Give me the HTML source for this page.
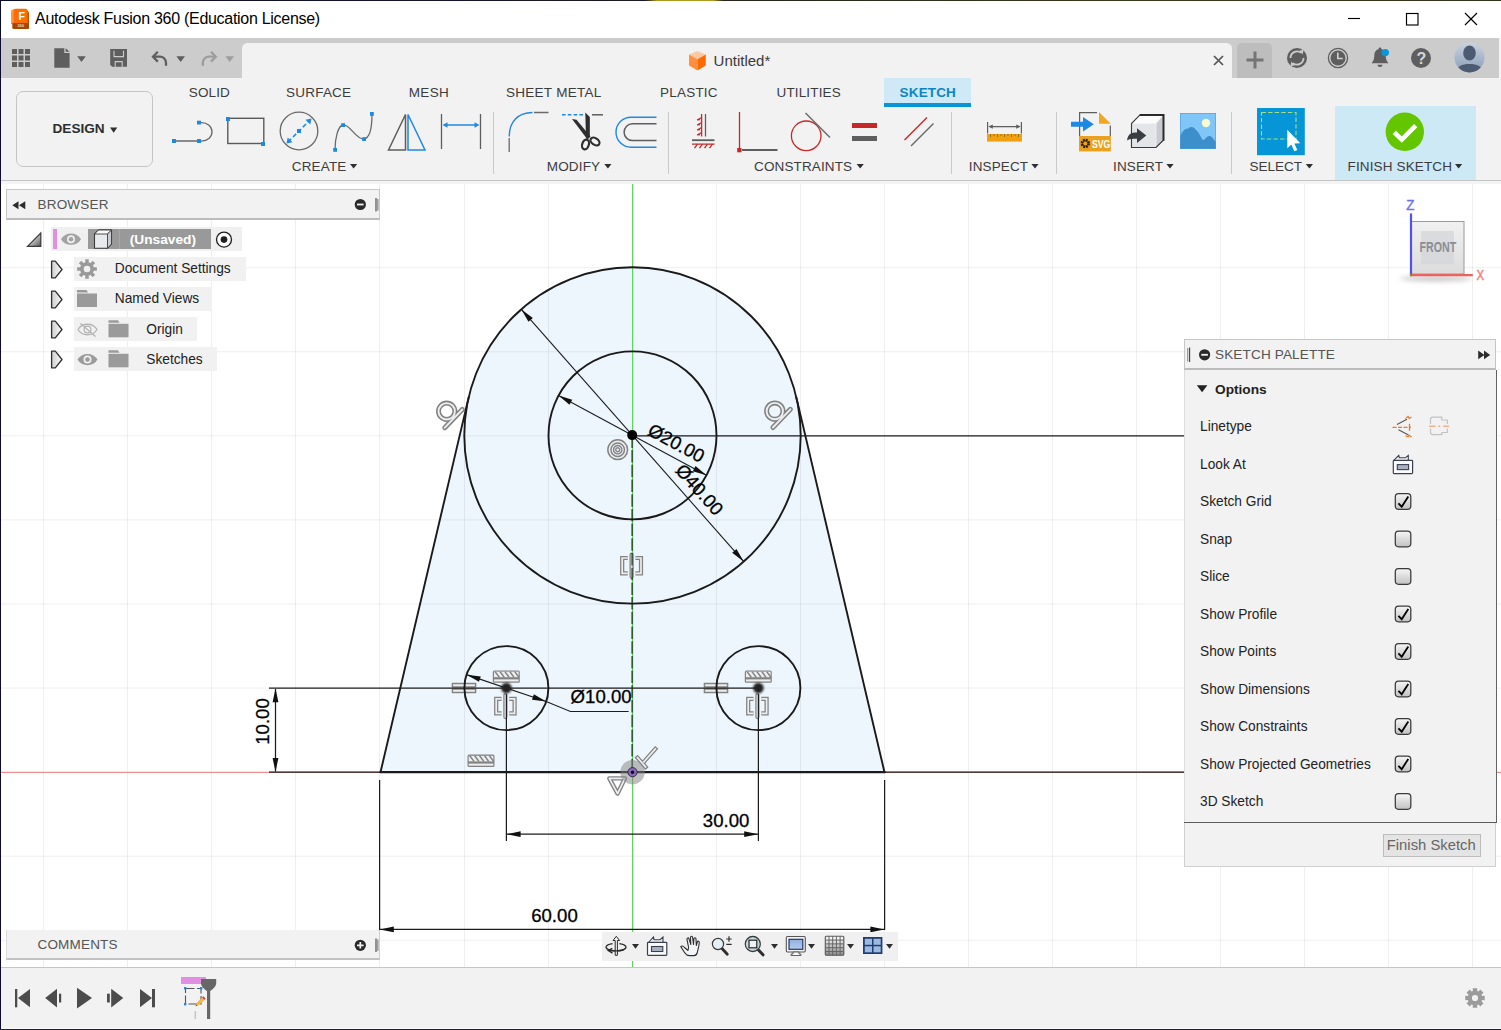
<!DOCTYPE html>
<html lang="en"><head><meta charset="utf-8"><title>Autodesk Fusion 360 (Education License)</title>
<style>
html,body{margin:0;padding:0;background:#fff;}
body{width:1501px;height:1030px;overflow:hidden;font-family:"Liberation Sans",Arial,sans-serif;}
#root{position:relative;width:1501px;height:1030px;overflow:hidden;background:#fff;}
#canvas{position:absolute;left:0;top:0;z-index:0;}
#icons{position:absolute;left:0;top:0;z-index:5;pointer-events:none;}
.b{position:absolute;box-sizing:border-box;z-index:1;}
.t{position:absolute;white-space:pre;line-height:20px;z-index:3;font-family:"Liberation Sans",Arial,sans-serif;}
svg text{font-family:"Liberation Sans",Arial,sans-serif;}

</style></head>
<body>
<div id="root">
<svg id="canvas" width="1501" height="1030" viewBox="0 0 1501 1030">
<defs>
<filter id="blur0" x="-60%" y="-120%" width="220%" height="340%"><feGaussianBlur stdDeviation="0.45"/></filter>
<filter id="blur1" x="-50%" y="-50%" width="200%" height="200%"><feGaussianBlur stdDeviation="0.9"/></filter>
<filter id="blur3" x="-50%" y="-200%" width="200%" height="500%"><feGaussianBlur stdDeviation="2.5"/></filter>
<linearGradient id="vcg" x1="0" y1="0" x2="0" y2="1"><stop offset="0" stop-color="#f1f1f1"/><stop offset="1" stop-color="#dcdcdc"/></linearGradient>
<linearGradient id="cbg" x1="0" y1="0" x2="0" y2="1"><stop offset="0" stop-color="#f6f6f6"/><stop offset="1" stop-color="#c2c2c2"/></linearGradient>
</defs>
<path d="M380.5 772.2 L468.77 396.89 A168.2 168.2 0 0 1 796.23 396.89 L884.5 772.2 Z" fill="#eef6fd"/>
<g stroke="#000" stroke-opacity="0.068" stroke-width="1">
<line x1="43.5" y1="181" x2="43.5" y2="967"/>
<line x1="127.5" y1="181" x2="127.5" y2="967"/>
<line x1="211.5" y1="181" x2="211.5" y2="967"/>
<line x1="295.5" y1="181" x2="295.5" y2="967"/>
<line x1="379.5" y1="181" x2="379.5" y2="967"/>
<line x1="464.5" y1="181" x2="464.5" y2="967"/>
<line x1="548.5" y1="181" x2="548.5" y2="967"/>
<line x1="716.5" y1="181" x2="716.5" y2="967"/>
<line x1="800.5" y1="181" x2="800.5" y2="967"/>
<line x1="884.5" y1="181" x2="884.5" y2="967"/>
<line x1="968.5" y1="181" x2="968.5" y2="967"/>
<line x1="1052.5" y1="181" x2="1052.5" y2="967"/>
<line x1="1136.5" y1="181" x2="1136.5" y2="967"/>
<line x1="1220.5" y1="181" x2="1220.5" y2="967"/>
<line x1="1304.5" y1="181" x2="1304.5" y2="967"/>
<line x1="1388.5" y1="181" x2="1388.5" y2="967"/>
<line x1="1472.5" y1="181" x2="1472.5" y2="967"/>
<line x1="1" y1="267.70" x2="1501" y2="267.70"/>
<line x1="1" y1="351.77" x2="1501" y2="351.77"/>
<line x1="1" y1="435.84" x2="1501" y2="435.84"/>
<line x1="1" y1="519.91" x2="1501" y2="519.91"/>
<line x1="1" y1="603.98" x2="1501" y2="603.98"/>
<line x1="1" y1="688.05" x2="1501" y2="688.05"/>
<line x1="1" y1="856.19" x2="1501" y2="856.19"/>
<line x1="1" y1="940.26" x2="1501" y2="940.26"/>
</g>
<line x1="1" y1="772.4" x2="1501" y2="772.4" stroke="#ee8f8f" stroke-width="1.3"/>
<line x1="632.6" y1="181" x2="632.6" y2="967" stroke="#5fd35f" stroke-width="1.25"/><g transform="translate(446.7,411.3)" filter="url(#blur0)"><path d="M-8.2,0 a8.2,8.2 0 1,0 16.4,0 a8.2,8.2 0 1,0 -16.4,0 M-1.9,16.4 L15.6,-1.8" fill="none" stroke="#828282" stroke-width="5.0" stroke-linecap="round"/><path d="M-8.2,0 a8.2,8.2 0 1,0 16.4,0 a8.2,8.2 0 1,0 -16.4,0 M-1.9,16.4 L15.6,-1.8" fill="none" stroke="#eceef0" stroke-width="1.9" stroke-linecap="round"/></g>
<g transform="translate(774.8,411.1)" filter="url(#blur0)"><path d="M-8.2,0 a8.2,8.2 0 1,0 16.4,0 a8.2,8.2 0 1,0 -16.4,0 M-1.9,16.4 L15.6,-1.8" fill="none" stroke="#828282" stroke-width="5.0" stroke-linecap="round"/><path d="M-8.2,0 a8.2,8.2 0 1,0 16.4,0 a8.2,8.2 0 1,0 -16.4,0 M-1.9,16.4 L15.6,-1.8" fill="none" stroke="#eceef0" stroke-width="1.9" stroke-linecap="round"/></g>
<g transform="translate(617.7,449.7)" filter="url(#blur0)"><path d="M-8.3,0 a8.3,8.3 0 1,0 16.6,0 a8.3,8.3 0 1,0 -16.6,0" fill="none" stroke="#828282" stroke-width="4.6" /><path d="M-8.3,0 a8.3,8.3 0 1,0 16.6,0 a8.3,8.3 0 1,0 -16.6,0" fill="none" stroke="#eceef0" stroke-width="1.7" /><path d="M-3.1,0 a3.1,3.1 0 1,0 6.2,0 a3.1,3.1 0 1,0 -6.2,0" fill="none" stroke="#828282" stroke-width="3.6" /><path d="M-3.1,0 a3.1,3.1 0 1,0 6.2,0 a3.1,3.1 0 1,0 -6.2,0" fill="none" stroke="#eceef0" stroke-width="0.9" /></g>
<g transform="translate(631.6,565.7)" filter="url(#blur0)"><path d="M0,-11 L0,11" fill="none" stroke="#828282" stroke-width="4.2" stroke-linecap="round"/><path d="M0,-11 L0,11" fill="none" stroke="#eceef0" stroke-width="1.7" stroke-linecap="round"/><path d="M-3.9,-7.7 L-9.4,-7.7 L-9.4,7.7 L-3.9,7.7 M3.9,-7.7 L9.4,-7.7 L9.4,7.7 L3.9,7.7" fill="none" stroke="#828282" stroke-width="4.2" stroke-linejoin="miter"/><path d="M-3.9,-7.7 L-9.4,-7.7 L-9.4,7.7 L-3.9,7.7 M3.9,-7.7 L9.4,-7.7 L9.4,7.7 L3.9,7.7" fill="none" stroke="#eceef0" stroke-width="1.7" stroke-linejoin="miter"/></g>
<g transform="translate(505.4,706.1)" filter="url(#blur0)"><path d="M0,-11 L0,11" fill="none" stroke="#828282" stroke-width="4.2" stroke-linecap="round"/><path d="M0,-11 L0,11" fill="none" stroke="#eceef0" stroke-width="1.7" stroke-linecap="round"/><path d="M-3.9,-7.2 L-9.2,-7.2 L-9.2,7.2 L-3.9,7.2 M3.9,-7.2 L9.2,-7.2 L9.2,7.2 L3.9,7.2" fill="none" stroke="#828282" stroke-width="4.2" stroke-linejoin="miter"/><path d="M-3.9,-7.2 L-9.2,-7.2 L-9.2,7.2 L-3.9,7.2 M3.9,-7.2 L9.2,-7.2 L9.2,7.2 L3.9,7.2" fill="none" stroke="#eceef0" stroke-width="1.7" stroke-linejoin="miter"/></g>
<g transform="translate(757.4,706.1)" filter="url(#blur0)"><path d="M0,-11 L0,11" fill="none" stroke="#828282" stroke-width="4.2" stroke-linecap="round"/><path d="M0,-11 L0,11" fill="none" stroke="#eceef0" stroke-width="1.7" stroke-linecap="round"/><path d="M-3.9,-7.2 L-9.2,-7.2 L-9.2,7.2 L-3.9,7.2 M3.9,-7.2 L9.2,-7.2 L9.2,7.2 L3.9,7.2" fill="none" stroke="#828282" stroke-width="4.2" stroke-linejoin="miter"/><path d="M-3.9,-7.2 L-9.2,-7.2 L-9.2,7.2 L-3.9,7.2 M3.9,-7.2 L9.2,-7.2 L9.2,7.2 L3.9,7.2" fill="none" stroke="#eceef0" stroke-width="1.7" stroke-linejoin="miter"/></g>
<g transform="translate(506.3,676.5)" filter="url(#blur0)"><rect x="-13.5" y="-6.1" width="27" height="12.3" rx="1.5" fill="#828282"/><rect x="-12.3" y="2.9" width="24.6" height="2.1" fill="#eceef0"/><rect x="-12.3" y="-4.9" width="24.6" height="5.6" fill="#eceef0"/><path d="M-11.2,-4.9 L-7.0,0.7" stroke="#828282" stroke-width="1.5" fill="none"/><path d="M-6.299999999999999,-4.9 L-2.099999999999999,0.7" stroke="#828282" stroke-width="1.5" fill="none"/><path d="M-1.399999999999999,-4.9 L2.800000000000001,0.7" stroke="#828282" stroke-width="1.5" fill="none"/><path d="M3.5000000000000013,-4.9 L7.700000000000001,0.7" stroke="#828282" stroke-width="1.5" fill="none"/><path d="M8.400000000000002,-4.9 L12.600000000000001,0.7" stroke="#828282" stroke-width="1.5" fill="none"/></g>
<g transform="translate(758.3,676.5)" filter="url(#blur0)"><rect x="-13.5" y="-6.1" width="27" height="12.3" rx="1.5" fill="#828282"/><rect x="-12.3" y="2.9" width="24.6" height="2.1" fill="#eceef0"/><rect x="-12.3" y="-4.9" width="24.6" height="5.6" fill="#eceef0"/><path d="M-11.2,-4.9 L-7.0,0.7" stroke="#828282" stroke-width="1.5" fill="none"/><path d="M-6.299999999999999,-4.9 L-2.099999999999999,0.7" stroke="#828282" stroke-width="1.5" fill="none"/><path d="M-1.399999999999999,-4.9 L2.800000000000001,0.7" stroke="#828282" stroke-width="1.5" fill="none"/><path d="M3.5000000000000013,-4.9 L7.700000000000001,0.7" stroke="#828282" stroke-width="1.5" fill="none"/><path d="M8.400000000000002,-4.9 L12.600000000000001,0.7" stroke="#828282" stroke-width="1.5" fill="none"/></g>
<g transform="translate(481.0,760.7)" filter="url(#blur0)"><rect x="-13.5" y="-6.1" width="27" height="12.3" rx="1.5" fill="#828282"/><rect x="-12.3" y="2.9" width="24.6" height="2.1" fill="#eceef0"/><rect x="-12.3" y="-4.9" width="24.6" height="5.6" fill="#eceef0"/><path d="M-11.2,-4.9 L-7.0,0.7" stroke="#828282" stroke-width="1.5" fill="none"/><path d="M-6.299999999999999,-4.9 L-2.099999999999999,0.7" stroke="#828282" stroke-width="1.5" fill="none"/><path d="M-1.399999999999999,-4.9 L2.800000000000001,0.7" stroke="#828282" stroke-width="1.5" fill="none"/><path d="M3.5000000000000013,-4.9 L7.700000000000001,0.7" stroke="#828282" stroke-width="1.5" fill="none"/><path d="M8.400000000000002,-4.9 L12.600000000000001,0.7" stroke="#828282" stroke-width="1.5" fill="none"/></g>
<g transform="translate(464,688)" filter="url(#blur0)"><path d="M-9.8,-2.7 L9.8,-2.7 M-9.8,2.7 L9.8,2.7" fill="none" stroke="#828282" stroke-width="5.0" stroke-linecap="square"/><path d="M-9.8,-2.7 L9.8,-2.7 M-9.8,2.7 L9.8,2.7" fill="none" stroke="#eceef0" stroke-width="2.1" stroke-linecap="square"/></g>
<g transform="translate(716,688)" filter="url(#blur0)"><path d="M-9.8,-2.7 L9.8,-2.7 M-9.8,2.7 L9.8,2.7" fill="none" stroke="#828282" stroke-width="5.0" stroke-linecap="square"/><path d="M-9.8,-2.7 L9.8,-2.7 M-9.8,2.7 L9.8,2.7" fill="none" stroke="#eceef0" stroke-width="2.1" stroke-linecap="square"/></g>
<g filter="url(#blur0)"><path d="M643.9,761.9 L655.4,748.9 M637.4,757.6 L645.6,767.0" fill="none" stroke="#828282" stroke-width="4.2" stroke-linecap="square"/><path d="M643.9,761.9 L655.4,748.9 M637.4,757.6 L645.6,767.0" fill="none" stroke="#eceef0" stroke-width="1.7" stroke-linecap="square"/></g>
<g filter="url(#blur0)"><path d="M609.3,778.4 L624.9,778.4 L617.6,793.6 Z" fill="none" stroke="#828282" stroke-width="4.4" stroke-linejoin="round"/><path d="M609.3,778.4 L624.9,778.4 L617.6,793.6 Z" fill="none" stroke="#eceef0" stroke-width="1.7" stroke-linejoin="round"/></g><g stroke="#1c1c1c" stroke-width="1.25" fill="none">
<line x1="637" y1="435.9" x2="1185" y2="435.9"/>
<line x1="269" y1="688.1" x2="758.5" y2="688.1"/>
<line x1="269" y1="772.2" x2="381" y2="772.2"/>
<line x1="884" y1="772.2" x2="1185" y2="772.2"/>
<line x1="275.5" y1="689" x2="275.5" y2="771.5"/>
<line x1="506.4" y1="694" x2="506.4" y2="841"/>
<line x1="758.4" y1="694" x2="758.4" y2="841"/>
<line x1="506.4" y1="834.2" x2="758.4" y2="834.2"/>
<line x1="379.6" y1="780" x2="379.6" y2="930"/>
<line x1="884.6" y1="780" x2="884.6" y2="930"/>
<line x1="379.6" y1="929.4" x2="884.6" y2="929.4"/>
<line x1="558.54" y1="395.58" x2="706.46" y2="475.22" stroke-width="1.1"/>
<line x1="521.40" y1="309.38" x2="743.60" y2="561.42" stroke-width="1.1"/>
<polyline points="466.62,674.63 546.18,701.57 570.4,711.5 628.6,711.5" stroke-width="1.1"/>
</g>
<g fill="#111">
<polygon points="275.50,688.30 278.40,702.30 272.60,702.30"/>
<polygon points="275.50,772.00 272.60,758.00 278.40,758.00"/>
<polygon points="506.60,834.20 520.60,831.30 520.60,837.10"/>
<polygon points="758.20,834.20 744.20,837.10 744.20,831.30"/>
<polygon points="379.80,929.40 393.80,926.50 393.80,932.30"/>
<polygon points="884.40,929.40 870.40,932.30 870.40,926.50"/>
<polygon points="558.54,395.58 572.24,399.66 569.49,404.77"/>
<polygon points="706.46,475.22 692.76,471.14 695.51,466.03"/>
<polygon points="521.40,309.38 532.83,317.97 528.48,321.80"/>
<polygon points="743.60,561.42 732.17,552.83 736.52,549.00"/>
<polygon points="466.62,674.63 480.81,676.38 478.95,681.87"/>
<polygon points="546.18,701.57 531.99,699.82 533.85,694.33"/>
</g>
<line x1="632.1" y1="435.4" x2="632.1" y2="772.2" stroke="#1b331b" stroke-width="1.25" stroke-dasharray="12.5 2.2"/>
<g stroke="#1a1a1a" stroke-width="1.9" fill="none" stroke-linecap="round">
<circle cx="632.5" cy="435.4" r="168.2"/>
<circle cx="632.5" cy="435.4" r="84"/>
<circle cx="506.4" cy="688.1" r="42"/>
<circle cx="758.4" cy="688.1" r="42"/>
<line x1="380.5" y1="772.2" x2="468.77" y2="396.89"/>
<line x1="884.5" y1="772.2" x2="796.23" y2="396.89"/>
<line x1="380.5" y1="772.2" x2="884.5" y2="772.2" stroke-width="2.3"/>
</g>
<circle cx="632.2" cy="435.09999999999997" r="5" fill="#000"/>
<g filter="url(#blur1)"><circle cx="506.4" cy="688.1" r="5.3" fill="#222"/><circle cx="758.4" cy="688.1" r="5.3" fill="#222"/></g>
<circle cx="632.5" cy="772.2" r="12.2" fill="#808080" fill-opacity="0.5"/>
<circle cx="632.5" cy="772.2" r="4.6" fill="#8d66c4" stroke="#1a1a1a" stroke-width="0.8"/>
<circle cx="632.5" cy="772.2" r="1.7" fill="#000"/>
<text x="531.2" y="921.5" font-size="18.6" fill="#000" stroke="#000" stroke-width="0.3">60.00</text>
<text x="702.8" y="826.5" font-size="18.6" fill="#000" stroke="#000" stroke-width="0.3">30.00</text>
<text x="570.6" y="703" font-size="18.6" fill="#000" stroke="#000" stroke-width="0.3">Ø10.00</text>
<text x="0" y="0" font-size="18.6" fill="#000" stroke="#000" stroke-width="0.3" transform="translate(269,744.8) rotate(-90)">10.00</text>
<text x="11.7" y="-7.6" font-size="18.6" fill="#000" stroke="#000" stroke-width="0.3" transform="translate(632.5,435.4) rotate(28.3)">Ø20.00</text>
<text x="54.4" y="-8" font-size="18.6" fill="#000" stroke="#000" stroke-width="0.3" transform="translate(632.5,435.4) rotate(48.6)">Ø40.00</text><g id="viewcube">
<ellipse cx="1436" cy="278.6" rx="36" ry="2.6" fill="#777" opacity="0.42" filter="url(#blur3)"/>
<rect x="1411.5" y="221.5" width="52.5" height="52.5" fill="url(#vcg)" stroke="#9b9b9b" stroke-width="1"/>
<rect x="1421" y="231" width="33" height="33" fill="#d3d6da" opacity="0.75"/>
<text x="1419.6" y="252.3" font-size="14.8" font-weight="bold" fill="#8a8e94" textLength="36.6" lengthAdjust="spacingAndGlyphs">FRONT</text>
<line x1="1411" y1="213.4" x2="1411" y2="275.2" stroke="#5252f2" stroke-width="2.2"/>
<line x1="1410" y1="275.2" x2="1472.8" y2="275.2" stroke="#ea6262" stroke-width="2.3"/>
<rect x="1409.9" y="274" width="2.2" height="2.3" fill="#8c8c2e"/>
<text x="1406.3" y="209.9" font-size="14.8" fill="#7070f2" stroke="#7070f2" stroke-width="0.45" textLength="8.2" lengthAdjust="spacingAndGlyphs">Z</text>
<text x="1476.6" y="279.8" font-size="14.8" fill="#f28282" stroke="#f28282" stroke-width="0.45" textLength="7.6" lengthAdjust="spacingAndGlyphs">X</text>
</g>

</svg>
<!-- window frame + title bar -->
<div class="b" style="left:0px;top:0px;width:1501px;height:38px;background:#ffffff;"></div>
<div class="b" style="left:0px;top:0px;width:1501px;height:1px;background:#2b2b33;background:linear-gradient(90deg,#0a0a2c 0%,#14142a 30%,#1a1a24 43%,#b09a1e 43.8%,#b09a1e 47.5%,#24241c 48.2%,#3a3a1e 75%,#33331c 100%)"></div>
<div class="b" style="left:0px;top:0px;width:1px;height:1030px;background:#0c0c32;z-index:6"></div>
<div class="t " style="left:35.00px;top:8.96px;font-size:16px;color:#000;font-weight:normal;letter-spacing:-0.29px">Autodesk Fusion 360 (Education License)</div>
<!-- quick access / document tab band -->
<div class="b" style="left:1px;top:38px;width:1498px;height:40px;background:#cccccc;"></div>
<div class="b" style="left:1499px;top:38px;width:2px;height:40px;background:#f4f4f4;"></div>
<div class="b" style="left:242px;top:43px;width:990px;height:35px;background:#f2f2f2;border-radius:5.5px 5.5px 0 0"></div>
<div class="b" style="left:1237px;top:43px;width:35px;height:35px;background:#bdbdbd;border-radius:5px 5px 0 0"></div>
<div class="t " style="left:713.60px;top:50.60px;font-size:15px;color:#3a3a3a;font-weight:normal;">Untitled*</div>
<!-- ribbon -->
<div class="b" style="left:1px;top:78px;width:1500px;height:102px;background:#f2f2f2;"></div>
<div class="b" style="left:1px;top:180px;width:1500px;height:1px;background:#c4c4c4;"></div>
<div class="b" style="left:1px;top:181px;width:1500px;height:3px;background:#f4f4f4;"></div>
<div class="b" style="left:884px;top:78px;width:87px;height:25.5px;background:#cfe9f6;"></div>
<div class="b" style="left:884px;top:103.3px;width:87px;height:3.5px;background:#0696d7;"></div>
<div class="b" style="left:1335px;top:105.5px;width:141px;height:74.5px;background:#cde9f6;"></div>
<div class="b" style="left:15.5px;top:91px;width:137px;height:76px;background:#f2f2f2;border:1px solid #c6c6c6;border-radius:7px"></div>
<div class="t " style="left:52.50px;top:118.59px;font-size:13.6px;color:#2e2e2e;font-weight:bold;">DESIGN</div>
<div class="t " style="left:188.80px;top:82.62px;font-size:13.5px;color:#3c3c3c;font-weight:normal;letter-spacing:0.12px">SOLID</div>
<div class="t " style="left:286.00px;top:82.62px;font-size:13.5px;color:#3c3c3c;font-weight:normal;letter-spacing:0.22px">SURFACE</div>
<div class="t " style="left:408.80px;top:82.62px;font-size:13.5px;color:#3c3c3c;font-weight:normal;letter-spacing:0.3px">MESH</div>
<div class="t " style="left:506.00px;top:82.62px;font-size:13.5px;color:#3c3c3c;font-weight:normal;letter-spacing:0.27px">SHEET METAL</div>
<div class="t " style="left:660.00px;top:82.62px;font-size:13.5px;color:#3c3c3c;font-weight:normal;letter-spacing:0.22px">PLASTIC</div>
<div class="t " style="left:776.50px;top:82.62px;font-size:13.5px;color:#3c3c3c;font-weight:normal;letter-spacing:0.15px">UTILITIES</div>
<div class="t " style="left:899.60px;top:82.62px;font-size:13.5px;color:#0e84c4;font-weight:bold;letter-spacing:0.15px">SKETCH</div>
<div class="t " style="left:291.80px;top:157.42px;font-size:13.5px;color:#3c3c3c;font-weight:normal;letter-spacing:0.15px">CREATE</div>
<div class="t " style="left:546.80px;top:157.42px;font-size:13.5px;color:#3c3c3c;font-weight:normal;letter-spacing:0.15px">MODIFY</div>
<div class="t " style="left:754.00px;top:157.42px;font-size:13.5px;color:#3c3c3c;font-weight:normal;letter-spacing:0.13px">CONSTRAINTS</div>
<div class="t " style="left:968.80px;top:157.42px;font-size:13.5px;color:#3c3c3c;font-weight:normal;letter-spacing:0.13px">INSPECT</div>
<div class="t " style="left:1113.00px;top:157.42px;font-size:13.5px;color:#3c3c3c;font-weight:normal;letter-spacing:0.15px">INSERT</div>
<div class="t " style="left:1249.50px;top:157.42px;font-size:13.5px;color:#3c3c3c;font-weight:normal;">SELECT</div>
<div class="t " style="left:1347.60px;top:157.42px;font-size:13.5px;color:#3c3c3c;font-weight:normal;letter-spacing:0.13px">FINISH SKETCH</div>
<div class="b" style="left:493px;top:112px;width:1px;height:62px;background:#c9c9c9;"></div>
<div class="b" style="left:668px;top:112px;width:1px;height:62px;background:#c9c9c9;"></div>
<div class="b" style="left:951px;top:112px;width:1px;height:62px;background:#c9c9c9;"></div>
<div class="b" style="left:1056px;top:112px;width:1px;height:62px;background:#c9c9c9;"></div>
<div class="b" style="left:1231px;top:112px;width:1px;height:62px;background:#c9c9c9;"></div>
<!-- BROWSER panel -->
<div class="b" style="left:6px;top:189px;width:374px;height:31px;background:#f2f2f2;border:1px solid #c9c9c9;border-bottom:2px solid #bcbcbc"></div>
<div class="t " style="left:37.50px;top:194.52px;font-size:13.5px;color:#555;font-weight:normal;letter-spacing:0.2px">BROWSER</div>
<div class="b" style="left:51px;top:227px;width:191px;height:24px;background:#f0f0f0;"></div>
<div class="b" style="left:53px;top:229px;width:4px;height:20px;background:#e08fe0;"></div>
<div class="b" style="left:88px;top:229px;width:123px;height:20px;background:#999999;"></div>
<div class="b" style="left:119px;top:229px;width:1px;height:20px;background:#a8a8a8;"></div>
<div class="t " style="left:129.80px;top:229.85px;font-size:13.7px;color:#fff;font-weight:bold;">(Unsaved)</div>
<div class="b" style="left:74px;top:257px;width:172px;height:24px;background:#f1f1f1;"></div>
<div class="t " style="left:114.80px;top:259.44px;font-size:13.73px;color:#222;font-weight:normal;">Document Settings</div>
<div class="b" style="left:74px;top:287px;width:138px;height:24px;background:#f1f1f1;"></div>
<div class="t " style="left:114.80px;top:289.44px;font-size:13.73px;color:#222;font-weight:normal;">Named Views</div>
<div class="b" style="left:74px;top:317px;width:123px;height:24px;background:#f1f1f1;"></div>
<div class="t " style="left:146.30px;top:319.54px;font-size:13.73px;color:#222;font-weight:normal;">Origin</div>
<div class="b" style="left:74px;top:347px;width:143px;height:24px;background:#f1f1f1;"></div>
<div class="t " style="left:146.30px;top:349.54px;font-size:13.73px;color:#222;font-weight:normal;">Sketches</div>
<!-- COMMENTS panel -->
<div class="b" style="left:6px;top:930px;width:374px;height:30px;background:#f2f2f2;border-bottom:2px solid #c2c2c2;border-left:1px solid #dcdcdc;border-right:1px solid #cfcfcf"></div>
<div class="t " style="left:37.50px;top:935.32px;font-size:13.5px;color:#555;font-weight:normal;letter-spacing:0.18px">COMMENTS</div>
<!-- navigation bar -->
<div class="b" style="left:602px;top:931.5px;width:296px;height:29px;background:#f0f0f0;"></div>
<!-- timeline -->
<div class="b" style="left:1px;top:967px;width:1500px;height:1px;background:#c6c6c6;"></div>
<div class="b" style="left:1px;top:968px;width:1500px;height:60px;background:#f2f2f2;"></div>
<div class="b" style="left:0px;top:1028px;width:1501px;height:1px;background:#f8f8f8;"></div>
<div class="b" style="left:0px;top:1029px;width:1501px;height:1px;background:#20202c;z-index:7"></div>
<!-- SKETCH PALETTE -->
<div class="b" style="left:1184px;top:339px;width:312px;height:31px;background:#f2f2f2;border:1px solid #c6c6c6;border-bottom:2px solid #bbbbbb"></div>
<div class="t " style="left:1215.00px;top:344.69px;font-size:13.6px;color:#555;font-weight:normal;letter-spacing:0.12px">SKETCH PALETTE</div>
<div class="b" style="left:1184px;top:370px;width:313px;height:452.5px;background:#f2f2f2;border-right:1px solid #636363;border-left:1px solid #dcdcdc"></div>
<div class="b" style="left:1184px;top:822px;width:313px;height:1px;background:#5a5a5a;"></div>
<div class="b" style="left:1184px;top:823px;width:312px;height:44px;background:#f2f2f2;border:1px solid #d0d0d0;border-top:none"></div>
<div class="t " style="left:1215.00px;top:379.55px;font-size:13.7px;color:#222;font-weight:bold;">Options</div>
<div class="t " style="left:1200.00px;top:417.44px;font-size:13.73px;color:#222;font-weight:normal;">Linetype</div>
<div class="t " style="left:1200.00px;top:454.94px;font-size:13.73px;color:#222;font-weight:normal;">Look At</div>
<div class="t " style="left:1200.00px;top:492.44px;font-size:13.73px;color:#222;font-weight:normal;">Sketch Grid</div>
<div class="t " style="left:1200.00px;top:529.94px;font-size:13.73px;color:#222;font-weight:normal;">Snap</div>
<div class="t " style="left:1200.00px;top:567.44px;font-size:13.73px;color:#222;font-weight:normal;">Slice</div>
<div class="t " style="left:1200.00px;top:604.94px;font-size:13.73px;color:#222;font-weight:normal;">Show Profile</div>
<div class="t " style="left:1200.00px;top:642.44px;font-size:13.73px;color:#222;font-weight:normal;">Show Points</div>
<div class="t " style="left:1200.00px;top:679.94px;font-size:13.73px;color:#222;font-weight:normal;">Show Dimensions</div>
<div class="t " style="left:1200.00px;top:717.44px;font-size:13.73px;color:#222;font-weight:normal;">Show Constraints</div>
<div class="t " style="left:1200.00px;top:754.94px;font-size:13.73px;color:#222;font-weight:normal;">Show Projected Geometries</div>
<div class="t " style="left:1200.00px;top:792.44px;font-size:13.73px;color:#222;font-weight:normal;">3D Sketch</div>
<div class="b" style="left:1382.5px;top:833.5px;width:98.5px;height:23px;background:#e4e4e4;border:1px solid #bdbdbd"></div>
<div class="t " style="left:1386.80px;top:834.87px;font-size:14.8px;color:#666;font-weight:normal;">Finish Sketch</div>

<svg id="icons" width="1501" height="1030" viewBox="0 0 1501 1030">
<defs>
<linearGradient id="fg" x1="0" y1="0" x2="1" y2="1"><stop offset="0" stop-color="#ff8f1f"/><stop offset="1" stop-color="#f26a00"/></linearGradient>
<linearGradient id="avg" x1="0" y1="0" x2="0" y2="1"><stop offset="0" stop-color="#c9d3e0"/><stop offset="1" stop-color="#8b9cb6"/></linearGradient>
<clipPath id="avc"><circle cx="1469.5" cy="57.5" r="15"/></clipPath>
</defs>
<!-- app icon -->
<g id="appicon">
<path d="M11,10.600 L14,9 V24.300 H11 z" fill="#ff9644"/>
<path d="M27,10 L29,12.300 V27.500 a1.500,1.500 0 0 1 -1.500,1.500 H27 z" fill="#c05200"/>
<rect x="13.600" y="8.800" width="13.900" height="15" rx="1.600" fill="#ff6d00"/>
<path d="M12.300,23.100 H29 V27.500 a1.500,1.500 0 0 1 -1.500,1.500 H13.800 a1.500,1.500 0 0 1 -1.500,-1.500 z" fill="#a84600"/>
<text x="18.500" y="19.900" font-size="10.600" font-weight="bold" fill="#fff">F</text>
<text x="17.200" y="27.100" font-size="4" font-weight="bold" fill="#f3cdb0" textLength="7" lengthAdjust="spacingAndGlyphs">360</text>
</g>
<!-- window controls -->
<g stroke="#000" stroke-width="1.150" fill="none">
<line x1="1348" y1="18.500" x2="1360" y2="18.500"/>
<rect x="1406.500" y="13.500" width="11.500" height="11.500"/>
<path d="M1465,13 L1477,25 M1477,13 L1465,25"/>
</g>
<!-- quick access icons -->
<g fill="#5e5e5e">
<g id="gridicon">
<rect x="12" y="49" width="5" height="5"/><rect x="18.500" y="49" width="5" height="5"/><rect x="25" y="49" width="5" height="5"/>
<rect x="12" y="55.500" width="5" height="5"/><rect x="18.500" y="55.500" width="5" height="5"/><rect x="25" y="55.500" width="5" height="5"/>
<rect x="12" y="62" width="5" height="5"/><rect x="18.500" y="62" width="5" height="5"/><rect x="25" y="62" width="5" height="5"/>
</g>
<path d="M54.300,48.200 h10 v4.800 h5.300 v14.700 h-15.300 z M65.600,48.200 l4,3.600 h-4 z"/>
<path d="M77.200,56.300 h8.600 l-4.300,5.600 z"/>
<!-- save -->
<path d="M110.200,49 h16.800 v17.800 h-14.800 l-2,-2 z"/>
<path d="M114,50.800 V56.600 H123.500 V50.800 M115.200,66.800 V61.600 H122.200 V66.800" fill="none" stroke="#cccccc" stroke-width="1.100"/>
<!-- undo -->
<path d="M176.400,56.300 h8.600 l-4.300,5.600 z"/>
</g>
<g fill="none" stroke="#5e5e5e" stroke-width="2.300">
<path d="M157.800,51.800 L153,56.700 L157.800,61.600"/>
<path d="M153.500,56.700 h6.500 a6,6 0 0 1 6,6 v3"/>
</g>
<!-- redo (disabled) -->
<g fill="none" stroke="#9d9d9d" stroke-width="2.300">
<path d="M211,51.800 L215.800,56.700 L211,61.600"/>
<path d="M215.300,56.700 h-6.500 a6,6 0 0 0 -6,6 v3"/>
</g>
<path d="M225.400,56.300 h8.600 l-4.300,5.600 z" fill="#9d9d9d"/>
<!-- document tab: cube, close, plus -->
<g id="doccube">
<path d="M697.400,50.900 L705.800,54.600 L697.400,59.200 L689,54.600 z" fill="#ffc9a2"/>
<path d="M689,54.600 L697.400,59.200 V70.400 L689,65.400 z" fill="#ff8f3c"/>
<path d="M705.800,54.600 L697.400,59.200 V70.400 L705.800,65.400 z" fill="#ff6a00"/>
</g>
<path d="M1214,56 L1223,65 M1223,56 L1214,65" stroke="#555" stroke-width="1.700" fill="none"/>
<path d="M1246.500,60 h17 M1255,51.500 v17" stroke="#747474" stroke-width="3" fill="none"/>
<!-- job status -->
<g id="jobstatus">
<circle cx="1297" cy="58" r="10" fill="#5e5e5e"/>
<path d="M1290.500,58 a6.500,6.500 0 0 1 10.500,-5.200" fill="none" stroke="#ccc" stroke-width="1.800"/>
<path d="M1303.500,58 a6.500,6.500 0 0 1 -10.500,5.200" fill="none" stroke="#ccc" stroke-width="1.800"/>
<path d="M1299.200,50.500 l4.300,-0.600 l-0.800,4.600 z" fill="#ccc"/>
<path d="M1294.800,65.500 l-4.300,0.600 l0.800,-4.600 z" fill="#ccc"/>
</g>
<!-- clock -->
<g id="clock">
<circle cx="1338" cy="58" r="9.600" fill="none" stroke="#5e5e5e" stroke-width="1.300"/>
<circle cx="1338" cy="58" r="7.500" fill="#5e5e5e"/>
<path d="M1337.800,52.500 v6 h5" fill="none" stroke="#d0d0d0" stroke-width="1.600"/>
</g>
<!-- bell -->
<g id="bell">
<path d="M1380,47.500 c0.900,0 1.400,0.600 1.400,1.500 c3,0.900 4.300,3.500 4.300,6.500 c0,3.500 0.800,5.500 2.800,7.700 h-17 c2,-2.200 2.800,-4.200 2.800,-7.700 c0,-3 1.300,-5.600 4.300,-6.500 c0,-0.900 0.500,-1.500 1.400,-1.500 z" fill="#5e5e5e"/>
<path d="M1377.500,64.700 h5 a2.500,2.300 0 0 1 -5,0 z" fill="#5e5e5e"/>
<circle cx="1385.300" cy="52.600" r="3.700" fill="#0a96dc"/>
</g>
<!-- help -->
<g id="help">
<circle cx="1421" cy="58" r="10" fill="#5e5e5e"/>
<text x="1416.400" y="63.800" font-size="16" font-weight="bold" fill="#d6d6d6">?</text>
</g>
<!-- avatar -->
<g id="avatar">
<circle cx="1469.500" cy="57.500" r="15" fill="url(#avg)"/>
<g clip-path="url(#avc)" fill="#4d5b72">
<ellipse cx="1469.500" cy="53" rx="6.300" ry="7.500"/>
<path d="M1455,76 c0,-9 6,-12 14.500,-12 s14.500,3 14.500,12 z"/>
</g>
</g>
<!-- dropdown arrows -->
<g fill="#2f2f2f">
<path d="M110,127.400 h7.300 l-3.650,5.400 z"/>
<path d="M350,164 h7.200 l-3.600,4.600 z"/>
<path d="M604.300,164 h7.200 l-3.600,4.600 z"/>
<path d="M856.600,164 h7.200 l-3.600,4.600 z"/>
<path d="M1031.400,164 h7.200 l-3.600,4.600 z"/>
<path d="M1166.400,164 h7.200 l-3.600,4.600 z"/>
<path d="M1305.800,164 h7.200 l-3.600,4.600 z"/>
<path d="M1455,164 h7.200 l-3.600,4.600 z"/>
</g>
<!-- CREATE: line/arc -->
<g id="i-line">
<path d="M176,141 H199 M200,122.600 C216,121.500 216,142 200,141" fill="none" stroke="#6a6a6a" stroke-width="1.300"/>
<g fill="#1e88e5"><rect x="172" y="139" width="4" height="4"/><rect x="197" y="139" width="4" height="4"/><rect x="197" y="120.700" width="4" height="3.800"/></g>
</g>
<!-- rectangle -->
<g id="i-rect">
<rect x="227.800" y="118.300" width="36" height="25.200" fill="none" stroke="#5a5a5a" stroke-width="1.400"/>
<g fill="#1e88e5"><rect x="226" y="117" width="4" height="4"/><rect x="261" y="142" width="4" height="4"/></g>
</g>
<!-- circle -->
<g id="i-circle">
<circle cx="299" cy="131" r="18.800" fill="none" stroke="#6a6a6a" stroke-width="1.300"/>
<path d="M288,142 L310,120" stroke="#1e88e5" stroke-width="1.500" stroke-dasharray="4.500 2.500" fill="none"/>
<path d="M311.500,118.500 l-6,1.200 l4.800,4.800 z M286.500,143.500 l6,-1.200 l-4.800,-4.800 z" fill="#1e88e5"/>
<rect x="297" y="129" width="4" height="4" fill="#1e88e5"/>
</g>
<!-- spline -->
<g id="i-spline">
<path d="M335,150 C335,138 338,126 343,125 C350,124 356,140 364,139 C370,138 372,126 372,114" fill="none" stroke="#6a6a6a" stroke-width="1.300"/>
<g fill="#1e88e5"><rect x="333.200" y="148" width="3.800" height="3.800"/><rect x="341.200" y="123.200" width="3.800" height="3.800"/><rect x="362.200" y="137.200" width="3.800" height="3.800"/><rect x="370" y="112" width="3.800" height="3.800"/></g>
</g>
<!-- mirror -->
<g id="i-mirror" fill="none" stroke-width="1.500">
<path d="M405.500,114.500 V150 H388.500 z" stroke="#5e5e5e"/>
<path d="M408,114.500 V150 H425 z" stroke="#1e88e5"/>
</g>
<!-- sketch dimension -->
<g id="i-dim">
<path d="M441.500,114 V149 M480.500,114 V149" stroke="#5e5e5e" stroke-width="1.300" fill="none"/>
<path d="M445,125 H477" stroke="#1e88e5" stroke-width="1.500"/>
<path d="M442.500,125 l5,-2.700 v5.400 z M479.500,125 l-5,-2.700 v5.400 z" fill="#1e88e5"/>
</g>
<!-- MODIFY: fillet -->
<g id="i-fillet" fill="none">
<path d="M509.200,136.500 C509.200,122 518,112.500 532.500,112.500" stroke="#1e88e5" stroke-width="1.400"/>
<path d="M534,112.500 H548.500 M509.200,138 V152" stroke="#6a6a6a" stroke-width="1.300"/>
</g>
<!-- trim (scissors) -->
<g id="i-trim">
<path d="M562,114.800 H583" stroke="#1e88e5" stroke-width="1.500" stroke-dasharray="3.600 2.200"/>
<path d="M592,114.800 H603" stroke="#5e5e5e" stroke-width="1.500"/>
<g fill="#2e2e2e">
<path d="M585.300,112.500 L589.800,117 L589.800,137 L586,138.500 z"/>
<path d="M572,119 L576.500,119.800 L590.500,136.500 L587.500,139.500 z"/>
</g>
<g fill="none" stroke="#2e2e2e" stroke-width="2.200">
<ellipse cx="585.500" cy="144.500" rx="3.300" ry="5" transform="rotate(18 585.500 144.500)"/>
<ellipse cx="595" cy="141.500" rx="3.300" ry="5" transform="rotate(-55 595 141.500)"/>
</g>
</g>
<!-- offset -->
<g id="i-offset" fill="none">
<path d="M656.500,117.200 H631 A15,15 0 0 0 631,147.200 H656.500" stroke="#1e88e5" stroke-width="1.400"/>
<path d="M656.500,123.800 H632.500 A8.400,8.400 0 0 0 632.500,140.600 H656.500" stroke="#5e5e5e" stroke-width="1.500"/>
</g>
<!-- CONSTRAINTS: fix/unfix -->
<g id="i-fix" fill="none">
<path d="M705.500,114 V136.500" stroke="#5e5e5e" stroke-width="1.300"/>
<path d="M692,140.200 H714.500" stroke="#5e5e5e" stroke-width="1.800"/>
<path d="M701.600,114 V136.500 M692,144.200 H714.500" stroke="#c62828" stroke-width="1.300"/>
<path d="M701.600,117.500 l-4.500,2.500 l3,-0.300 M701.600,122.500 l-4.500,2.500 l3,-0.300 M701.600,127.500 l-4.500,2.500 l3,-0.300 M701.600,132.500 l-4.500,2.500 l3,-0.300" stroke="#c62828" stroke-width="1.100"/>
<path d="M697.500,144.200 l-3,4 M702.500,144.200 l-3,4 M707.500,144.200 l-3,4 M712.500,144.200 l-3,4" stroke="#c62828" stroke-width="1.300"/>
</g>
<!-- coincident -->
<g id="i-coinc">
<path d="M739.500,112 V148" stroke="#c62828" stroke-width="1.300"/>
<path d="M742,150 H777.500" stroke="#5e5e5e" stroke-width="1.800"/>
<rect x="737.200" y="148" width="4.300" height="4.300" fill="#c62828"/>
</g>
<!-- tangent -->
<g id="i-tangent" fill="none">
<circle cx="806.200" cy="135.800" r="14.800" stroke="#c62828" stroke-width="1.300"/>
<path d="M805.500,113 L830,137.500" stroke="#6a6a6a" stroke-width="1.400"/>
</g>
<!-- equal -->
<rect x="852" y="123" width="25" height="5" fill="#c62828"/>
<rect x="852" y="136" width="25" height="5" fill="#5e5e5e"/>
<!-- parallel -->
<path d="M904.500,140 L927,117.500" stroke="#c62828" stroke-width="1.400"/>
<path d="M911,146 L933.500,123.500" stroke="#6a6a6a" stroke-width="1.400"/>
<!-- INSPECT: measure -->
<g id="i-measure">
<rect x="987" y="134" width="35" height="7.600" fill="#f0a010"/>
<path d="M990.500,134 v3 M994,134 v2 M997.500,134 v3 M1001,134 v2 M1004.500,134 v3 M1008,134 v2 M1011.500,134 v3 M1015,134 v2 M1018.500,134 v3" stroke="#8a6a20" stroke-width="0.900"/>
<path d="M987.600,122 V133.500 M1021.400,122 V133.500 M990,126.600 H1019" stroke="#5e5e5e" stroke-width="1.200" fill="none"/>
<path d="M988.300,126.600 l4.500,-2.200 v4.400 z M1020.700,126.600 l-4.500,-2.200 v4.400 z" fill="#5e5e5e"/>
</g>
<!-- INSERT: svg -->
<g id="i-svg">
<path d="M1097,112.600 H1079.600 V136 M1110.300,125.400 V136" fill="none" stroke="#5e5e5e" stroke-width="1.200"/>
<path d="M1099,112.100 L1110.800,123.800 H1099 z" fill="#efa724"/>
<path d="M1071,121.800 H1083 V117 L1093.800,124.300 L1083,131.600 V126.800 H1071 z" fill="#1e88e5"/>
<rect x="1079" y="136" width="31.800" height="15.400" fill="#eaa21e"/>
<text x="1092" y="148" font-size="10" font-weight="bold" fill="#fff" textLength="18.300" lengthAdjust="spacingAndGlyphs">SVG</text>
<circle cx="1085.300" cy="143.500" r="3.600" fill="none" stroke="#2e2206" stroke-width="2.200" stroke-dasharray="1.900 0.930"/>
<circle cx="1085.300" cy="143.500" r="2.600" fill="none" stroke="#2e2206" stroke-width="1"/>
</g>
<!-- insert derive (box with arrow) -->
<g id="i-derive">
<path d="M1131.500,123.500 L1140,114.800 H1163.500 V140.200 L1156,147.500 H1131.500 z" fill="#e4e5e8"/>
<path d="M1140,114.800 H1163.500 L1156,123.500 H1131.500 z" fill="#fbfbfb"/>
<path d="M1163.500,114.800 V140.200 L1156,147.500 V123.500 z" fill="#c9cbd1"/>
<path d="M1156,123.500 V147.500 M1131.500,123.500 H1156 L1163,115.300" fill="none" stroke="#f4f4f6" stroke-width="0.800"/>
<path d="M1140,114.800 L1131.500,123.500 V147.500 H1156 L1163.600,140" fill="none" stroke="#3a3a3a" stroke-width="1.100"/>
<path d="M1139.700,115 H1163.500 V140.700" fill="none" stroke="#2a2a2a" stroke-width="2"/>
<path d="M1127,140.500 C1128,134 1131,132.500 1137,132.500 V128.300 L1146.300,135.600 L1137,143 V138.800 C1132,138.800 1129.500,139 1127,140.500 z" fill="#3a3d42"/>
</g>
<!-- insert image -->
<g id="i-image">
<rect x="1180" y="113" width="36" height="36" fill="#80c6f8"/>
<path d="M1180,149 V137 C1182,131 1185,128.500 1188.500,128.500 C1190.500,126.500 1193.500,126.500 1195.500,129.500 C1198,131 1199.500,134.500 1201.500,138 C1202.500,140.500 1204,140.500 1205.500,138.500 C1207.500,135.500 1210.500,135 1212.500,138 C1214,139.500 1215,141 1216,142 V149 z" fill="#3d8fcc"/>
<circle cx="1206" cy="123" r="4.200" fill="#fdfbd0"/>
<rect x="1180.300" y="113.300" width="35.400" height="35.400" fill="none" stroke="#4a9fe0" stroke-width="0.600"/>
</g>
<!-- SELECT -->
<g id="i-select">
<rect x="1257" y="108" width="47.800" height="47.200" fill="#0696d7"/>
<rect x="1261.500" y="112.500" width="34.500" height="26.500" fill="none" stroke="#a5e07a" stroke-width="1.100" stroke-dasharray="4.400 2.200"/>
<path d="M1287.300,129.700 V148.300 L1291.300,144.600 L1294.300,151.300 L1297.300,150 L1294.400,143.500 L1300.300,143.300 z" fill="#fff"/>
</g>
<!-- FINISH SKETCH -->
<g id="i-finish">
<circle cx="1404.800" cy="131.800" r="19.200" fill="#63c600"/>
<path d="M1394.300,132.300 L1401.800,139.600 L1415.700,125.600" fill="none" stroke="#fff" stroke-width="4.600"/>
</g>
<defs>
<linearGradient id="trg" x1="0" y1="0" x2="1" y2="1"><stop offset="0.3" stop-color="#e8e8e8"/><stop offset="1" stop-color="#555"/></linearGradient>
<linearGradient id="ptg" x1="0" y1="0" x2="1" y2="0"><stop offset="0" stop-color="#cfcfcf"/><stop offset="1" stop-color="#fbfbfb"/></linearGradient>
</defs>
<g id="browser-icons">
<path d="M18.500,201.300 V209.300 L12.300,205.300 z M25.300,201.300 V209.300 L19,205.300 z" fill="#2c2c2c"/>
<circle cx="360.300" cy="204.500" r="5.600" fill="#2a2a2a"/><rect x="357" y="203.600" width="6.600" height="1.800" fill="#f2f2f2"/>
<path d="M376,198 V211.500" stroke="#444" stroke-width="1.100"/><path d="M377.800,199 V210.500" stroke="#9a9a9a" stroke-width="1.500"/>
<path d="M27.500,246.300 L40.800,233 V246.300 z" fill="url(#trg)" stroke="#3a3a3a" stroke-width="1.200"/>
<path d="M61,239.2 C65,231.7 77,231.7 81,239.2 C77,246.7 65,246.7 61,239.2 z" fill="#a3a3a3"/><circle cx="71" cy="239.2" r="4" fill="#f0f0f0"/><circle cx="71" cy="239.2" r="2.300" fill="#a3a3a3"/>
<path d="M94.500,234 L98.500,230 H111.500 V244 L107.500,248.300 H94.500 z" fill="#e9eaee" stroke="#3c3c3c" stroke-width="1.100"/><path d="M98.500,230 H111.500 L107.500,234 H94.500 z" fill="#fafafa" stroke="#3c3c3c" stroke-width="0.900"/><path d="M111.500,230 V244 L107.500,248.300 V234 z" fill="#c9cbd1" stroke="#3c3c3c" stroke-width="0.900"/>
<circle cx="224" cy="239.600" r="7.500" fill="#fafafa" stroke="#1e1e1e" stroke-width="1.300"/><circle cx="224" cy="239.600" r="3.300" fill="#1e1e1e"/>
<path d="M51.600,261.2 H55.300 L62,269.5 L55.300,277.8 H51.600 z" fill="url(#ptg)" stroke="#303030" stroke-width="1.300" stroke-linejoin="round"/>
<path d="M51.600,291.2 H55.300 L62,299.5 L55.300,307.8 H51.600 z" fill="url(#ptg)" stroke="#303030" stroke-width="1.300" stroke-linejoin="round"/>
<path d="M51.600,321.2 H55.300 L62,329.5 L55.300,337.8 H51.600 z" fill="url(#ptg)" stroke="#303030" stroke-width="1.300" stroke-linejoin="round"/>
<path d="M51.600,351.2 H55.300 L62,359.5 L55.300,367.8 H51.600 z" fill="url(#ptg)" stroke="#303030" stroke-width="1.300" stroke-linejoin="round"/>
<path d="M93.80,267.34 L96.84,267.21 L96.84,270.79 L93.80,270.66 L92.98,272.63 L95.22,274.69 L92.69,277.22 L90.63,274.98 L88.66,275.80 L88.79,278.84 L85.21,278.84 L85.34,275.80 L83.37,274.98 L81.31,277.22 L78.78,274.69 L81.02,272.63 L80.20,270.66 L77.16,270.79 L77.16,267.21 L80.20,267.34 L81.02,265.37 L78.78,263.31 L81.31,260.78 L83.37,263.02 L85.34,262.20 L85.21,259.16 L88.79,259.16 L88.66,262.20 L90.63,263.02 L92.69,260.78 L95.22,263.31 L92.98,265.37 z M83.7,269 a3.3,3.3 0 1,0 6.6,0 a3.3,3.3 0 1,0 -6.6,0 z" fill="#9a9a9a" fill-rule="evenodd"/>
<path d="M77,290 h9.500 l1.500,2.500 h-11 z" fill="#9a9a9a"/><rect x="77" y="293.5" width="20" height="13.500" fill="#9a9a9a"/>
<path d="M108.5,320.3 h9.500 l1.500,2.500 h-11 z" fill="#9a9a9a"/><rect x="108.5" y="323.8" width="20" height="13.500" fill="#9a9a9a"/>
<path d="M108.5,350.3 h9.500 l1.500,2.500 h-11 z" fill="#9a9a9a"/><rect x="108.5" y="353.8" width="20" height="13.500" fill="#9a9a9a"/>
<path d="M78.0,329.5 C82.0,322.5 93.0,322.5 97.0,329.5 C93.0,336.5 82.0,336.5 78.0,329.5 z" fill="none" stroke="#b4b4b4" stroke-width="1.300"/><circle cx="87.5" cy="329.5" r="3.400" fill="none" stroke="#b4b4b4" stroke-width="1.300"/><path d="M80.5,323.5 L95.5,336.5" stroke="#b4b4b4" stroke-width="1.300"/>
<path d="M77.5,359.5 C81.5,352.0 93.5,352.0 97.5,359.5 C93.5,367.0 81.5,367.0 77.5,359.5 z" fill="#9c9c9c"/><circle cx="87.5" cy="359.5" r="4" fill="#f0f0f0"/><circle cx="87.5" cy="359.5" r="2.300" fill="#9c9c9c"/>
</g>
<circle cx="360.300" cy="945.300" r="5.600" fill="#2a2a2a"/><path d="M357,945.300 h6.600 M360.300,942 v6.600" stroke="#f2f2f2" stroke-width="1.700"/>
<path d="M376,938.500 V952" stroke="#444" stroke-width="1.100"/><path d="M377.800,939.500 V951" stroke="#9a9a9a" stroke-width="1.500"/>
<g id="palette-icons">
<path d="M1187.700,348 V361.500" stroke="#9a9a9a" stroke-width="1.300"/><path d="M1189.600,347.500 V362" stroke="#444" stroke-width="1.100"/>
<circle cx="1204.600" cy="354.800" r="5.600" fill="#2a2a2a"/><rect x="1201.300" y="353.900" width="6.600" height="1.800" fill="#f2f2f2"/>
<path d="M1478.200,350.600 V359.200 L1484.400,354.900 z M1484,350.600 V359.200 L1490.200,354.900 z" fill="#2c2c2c"/>
<path d="M1196.800,385.200 H1207.400 L1202.100,392.300 z" fill="#222"/>
<g fill="none"><path d="M1392.500,427.300 H1411" stroke="#f07820" stroke-width="1.300" stroke-dasharray="4 1.500"/><path d="M1409.500,423.800 V430.800" stroke="#f07820" stroke-width="1.300"/><path d="M1397,424.600 L1407,419.300 M1398.500,429.800 L1408.500,435" stroke="#555" stroke-width="1.100"/><path d="M1405.500,418.600 l2.500,-2.200 l1.200,2 l2.300,-1.400 M1405.500,435.700 l2.500,1 l1.200,-1.400 l2.300,1.700" stroke="#f07820" stroke-width="1.200"/></g>
<g fill="none"><path d="M1430.500,424 V419.500 Q1430.500,417.200 1433,417.200 H1441.800 V420 H1447.300 V424 M1447.300,428.500 V432.500 H1441.800 V434.600 H1433 Q1430.500,434.600 1430.500,432.300 V428.500" stroke="#c2c2c2" stroke-width="1.200"/><path d="M1429,426.200 H1435.500 M1438.200,426.200 H1440.200 M1443,426.200 H1449" stroke="#f3b08a" stroke-width="1.600"/></g>
<g><path d="M1393.8,460.3 L1398.8,455.3 L1399.3,457.8 L1405.3,457.8 L1408.3,455.3 V460.3" fill="none" stroke="#3a4050" stroke-width="1.100"/><rect x="1393.3" y="460.3" width="19.300" height="13.300" rx="0.800" fill="#fbfbfd" stroke="#3a4050" stroke-width="1.200"/><rect x="1397.3" y="464.6" width="11.300" height="5" fill="#a9b1c2" stroke="#3a4050" stroke-width="1.100"/></g>
<rect x="1395.300" y="493.60" width="15.500" height="15.700" rx="3.200" fill="url(#cbg)" stroke="#3a3a3a" stroke-width="1.250"/>
<path d="M1398.400,503.40 L1401.700,506.70 L1408.300,496.40" fill="none" stroke="#000" stroke-width="1.800"/>
<rect x="1395.300" y="531.10" width="15.500" height="15.700" rx="3.200" fill="url(#cbg)" stroke="#3a3a3a" stroke-width="1.250"/>
<rect x="1395.300" y="568.60" width="15.500" height="15.700" rx="3.200" fill="url(#cbg)" stroke="#3a3a3a" stroke-width="1.250"/>
<rect x="1395.300" y="606.10" width="15.500" height="15.700" rx="3.200" fill="url(#cbg)" stroke="#3a3a3a" stroke-width="1.250"/>
<path d="M1398.400,615.90 L1401.700,619.20 L1408.300,608.90" fill="none" stroke="#000" stroke-width="1.800"/>
<rect x="1395.300" y="643.60" width="15.500" height="15.700" rx="3.200" fill="url(#cbg)" stroke="#3a3a3a" stroke-width="1.250"/>
<path d="M1398.400,653.40 L1401.700,656.70 L1408.300,646.40" fill="none" stroke="#000" stroke-width="1.800"/>
<rect x="1395.300" y="681.10" width="15.500" height="15.700" rx="3.200" fill="url(#cbg)" stroke="#3a3a3a" stroke-width="1.250"/>
<path d="M1398.400,690.90 L1401.700,694.20 L1408.300,683.90" fill="none" stroke="#000" stroke-width="1.800"/>
<rect x="1395.300" y="718.60" width="15.500" height="15.700" rx="3.200" fill="url(#cbg)" stroke="#3a3a3a" stroke-width="1.250"/>
<path d="M1398.400,728.40 L1401.700,731.70 L1408.300,721.40" fill="none" stroke="#000" stroke-width="1.800"/>
<rect x="1395.300" y="756.10" width="15.500" height="15.700" rx="3.200" fill="url(#cbg)" stroke="#3a3a3a" stroke-width="1.250"/>
<path d="M1398.400,765.90 L1401.700,769.20 L1408.300,758.90" fill="none" stroke="#000" stroke-width="1.800"/>
<rect x="1395.300" y="793.60" width="15.500" height="15.700" rx="3.200" fill="url(#cbg)" stroke="#3a3a3a" stroke-width="1.250"/>
</g><defs>
<linearGradient id="grdg" x1="0" y1="0" x2="0" y2="1"><stop offset="0" stop-color="#ffffff"/><stop offset="1" stop-color="#8a8a8a"/></linearGradient>
<linearGradient id="scrg" x1="0" y1="0" x2="0" y2="1"><stop offset="0" stop-color="#8fb0dc"/><stop offset="1" stop-color="#b4cbea"/></linearGradient>
</defs>
<g id="navbar-icons">
<!-- dropdown arrows -->
<g fill="#2e2e2e">
<path d="M632,944 h7 l-3.500,4.800 z"/><path d="M771,944 h7 l-3.500,4.800 z"/><path d="M808,944 h7 l-3.500,4.800 z"/><path d="M847,944 h7 l-3.500,4.800 z"/><path d="M886,944 h7 l-3.500,4.800 z"/>
</g>
<!-- orbit -->
<g fill="none" stroke="#2a2a2a">
<path d="M619.400,943.700 A10,3.700 0 1 1 612.600,943.700" stroke-width="1.300"/>
<path d="M612.300,948.300 L608.300,950.600 L612.500,953.200" stroke-width="1.400"/>
<path d="M615.200,955.300 V940.500 H613 L616.300,936.300 L619.600,940.500 H617.400 V955.300 z" fill="#f4f4f4" stroke-width="1"/>
<path d="M608,950.200 C611,951.200 621,951.200 624,949.600" stroke-width="1.300"/>
</g>
<!-- look at -->
<g>
<path d="M648.500,942.500 L653.500,937 L654,939.700 L660,939.700 L663,937 V942.500" fill="none" stroke="#3a4050" stroke-width="1.100"/>
<rect x="647.500" y="942.300" width="19.300" height="13" rx="0.800" fill="#fbfbfd" stroke="#3a4050" stroke-width="1.200"/>
<rect x="651.500" y="946.500" width="11.300" height="5" fill="#a9b1c2" stroke="#3a4050" stroke-width="1.100"/>
</g>
<!-- pan hand -->
<path d="M684.500,947.500 C683,945.500 681.500,945.800 680.800,946.600 C682.500,949 684,952.500 686.500,954.700 C687.500,955.500 688.500,955.600 690,955.600 H694 C696,955.600 696.800,954.500 697.300,952.500 C698,949.500 699,946 699.300,942.500 C699.400,941 697.800,940.600 697.300,942 L696.300,945.500 L696,939 C696,937.400 694,937.400 693.900,939 L693.500,944.500 L692.600,937.300 C692.400,935.800 690.500,936 690.500,937.500 L690.800,944.500 L689,938.800 C688.500,937.300 686.700,937.800 687,939.300 L688.600,947.500 L688,950.500 z" fill="#f3f5f8" stroke="#2e2e2e" stroke-width="1.100" stroke-linejoin="round"/>
<!-- zoom -->
<g>
<path d="M722,948.500 L727.300,954.300" stroke="#2e2e2e" stroke-width="2.800" stroke-linecap="round"/>
<circle cx="718" cy="944" r="5.600" fill="#e6f0f4" stroke="#3a3a3a" stroke-width="1.200"/>
<path d="M726.300,939 h5.400 M729,936.300 v5.400 M726.300,944.300 h5.400" stroke="#2e2e2e" stroke-width="1.200" fill="none"/>
</g>
<!-- zoom fit -->
<g>
<path d="M758.500,950 L763,954.800" stroke="#2e2e2e" stroke-width="3" stroke-linecap="round"/>
<circle cx="752.800" cy="944" r="7.500" fill="#dcebec" stroke="#3a3a3a" stroke-width="1.300"/>
<circle cx="752.800" cy="944" r="5.800" fill="none" stroke="#b5d5d8" stroke-width="1"/>
<rect x="749" y="940.200" width="7.800" height="7.600" fill="#f0f0f4" stroke="#2e2e2e" stroke-width="1.300"/>
</g>
<!-- display settings -->
<g>
<rect x="786.300" y="936.500" width="19" height="15.500" rx="1.200" fill="#f4f4f4" stroke="#555" stroke-width="1.100"/>
<rect x="789" y="939.300" width="13.800" height="10" fill="url(#scrg)" stroke="#1f3a70" stroke-width="1.200"/>
<path d="M793,952 h6 v2 h2 v1.500 h-10 v-1.500 h2 z" fill="#f8f8f8" stroke="#555" stroke-width="0.900"/>
</g>
<!-- grid and snaps -->
<g>
<rect x="825.300" y="936.300" width="18.500" height="19" rx="1" fill="url(#grdg)" stroke="#555" stroke-width="1.100"/>
<path d="M829,936.300 v19 M832.700,936.300 v19 M836.400,936.300 v19 M840.100,936.300 v19 M825.300,940.100 h18.500 M825.300,943.900 h18.500 M825.300,947.700 h18.500 M825.300,951.500 h18.500" stroke="#666" stroke-width="1" fill="none"/>
</g>
<!-- viewports -->
<g>
<rect x="863" y="937" width="19.400" height="17" fill="#223d72"/>
<rect x="864.800" y="938.800" width="7.200" height="6" fill="#9cb9e2"/><rect x="873.500" y="938.800" width="7.200" height="6" fill="#9cb9e2"/>
<rect x="864.800" y="946.300" width="7.200" height="6" fill="#9cb9e2"/><rect x="873.500" y="946.300" width="7.200" height="6" fill="#9cb9e2"/>
</g>
</g>
<!-- timeline -->
<g id="timeline-icons" fill="#4c4c4c">
<rect x="15" y="989" width="2.300" height="18.300"/><path d="M30,989 V1007.300 L18,998.100 z"/>
<path d="M57,988.800 V1007.400 L45.200,998.100 z"/><rect x="59" y="993.700" width="2.200" height="8.800"/>
<path d="M77,987.800 V1008.400 L92,998.100 z"/>
<rect x="107" y="993.700" width="2.800" height="8.800"/><path d="M111.200,988.800 V1007.400 L123.300,998.100 z"/>
<path d="M140,989 V1007.300 L152,998.100 z"/><rect x="152" y="989" width="3" height="18.300"/>
</g>
<g id="timeline-marker">
<rect x="181" y="977" width="25" height="7" fill="#e08fe2"/>
<rect x="185.500" y="988.500" width="15.500" height="15.500" fill="none" stroke="#555" stroke-width="1.100" stroke-dasharray="9 2.500"/>
<g fill="#1e88e5"><rect x="184" y="987" width="2.400" height="2.400"/><rect x="200" y="987" width="2.400" height="2.400"/><rect x="184" y="1003" width="2.400" height="2.400"/></g>
<path d="M195.600,1006.200 L196.600,1003 L202,997.600 L204.300,999.900 L198.900,1005.300 z" fill="#f5b73c"/>
<path d="M202,997.600 L203.300,996.300 L205.600,998.600 L204.300,999.900 z" fill="#ee3a3a"/>
<path d="M195.600,1006.200 L196.100,1004.600 L197.200,1005.700 z" fill="#444"/>
<rect x="194.600" y="1011" width="1.500" height="8" fill="#c4c4c4"/>
<path d="M201,979 H216.200 V983 C216.200,986.500 213,989 210.200,991 V1019 H207 V991 C204.200,989 201,986.500 201,983 z" fill="#676767"/>
</g>
<!-- settings gear (bottom right) -->
<path d="M1482.09,995.88 L1484.73,995.70 L1484.73,1000.30 L1482.09,1000.12 L1481.51,1001.52 L1483.51,1003.26 L1480.26,1006.51 L1478.52,1004.51 L1477.12,1005.09 L1477.30,1007.73 L1472.70,1007.73 L1472.88,1005.09 L1471.48,1004.51 L1469.74,1006.51 L1466.49,1003.26 L1468.49,1001.52 L1467.91,1000.12 L1465.27,1000.30 L1465.27,995.70 L1467.91,995.88 L1468.49,994.48 L1466.49,992.74 L1469.74,989.49 L1471.48,991.49 L1472.88,990.91 L1472.70,988.27 L1477.30,988.27 L1477.12,990.91 L1478.52,991.49 L1480.26,989.49 L1483.51,992.74 L1481.51,994.48 z M1471.9,998 a3.1,3.1 0 1,0 6.2,0 a3.1,3.1 0 1,0 -6.2,0 z" fill="#9b9b9b" fill-rule="evenodd"/>

</svg>
</div>
</body></html>
